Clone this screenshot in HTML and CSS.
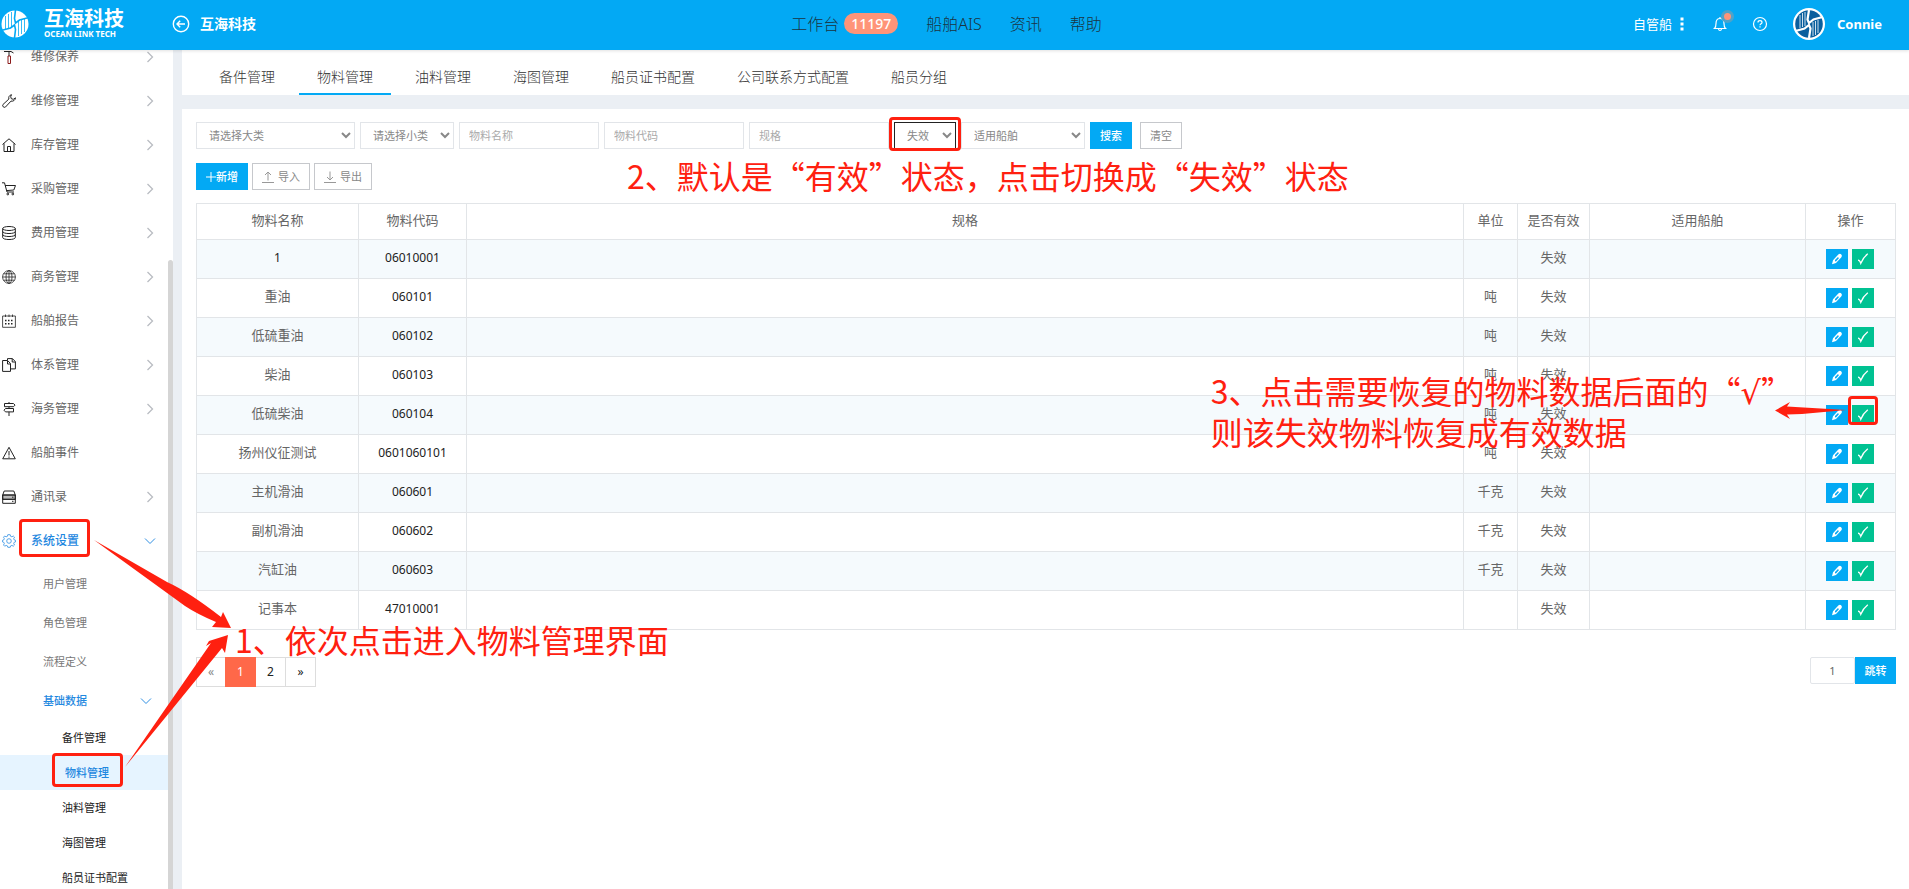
FILE: index.html
```html
<!DOCTYPE html>
<html lang="zh-CN">
<head>
<meta charset="utf-8">
<title>物料管理 - 互海科技</title>
<link rel="stylesheet" href="styles.css">
</head>
<body>
<svg class="sprite" aria-hidden="true">
  <symbol id="chev" viewBox="0 0 8 12"><path d="M1.5 1l5 5-5 5"/></symbol>
  <symbol id="chev-down" viewBox="0 0 12 8"><path d="M1 1.5l5 5 5-5"/></symbol>
  <symbol id="edit" viewBox="0 0 12 12"><path fill="#fff" fill-rule="evenodd" d="M1 11.2l1-4L7.3 1.6c1-1 2.200-.9 3-.2.8.9.8 2-.1 3L5 9.900zM4 8.300l1 .2 2.900-3.200-.9-1.200L4 7.100z"/></symbol>
  <symbol id="tick" viewBox="0 0 12 12"><path fill="none" stroke="#fff" stroke-width="1.300" d="M1 7.200c1.500 0 2.300 1.500 2.800 3.100C5.500 6 8 3 10.800.8"/></symbol>
</svg>

<header class="topbar">
  <div class="brand">
    <svg class="brand-mark" viewBox="0 0 28 28">
      <circle cx="14" cy="14" r="13.500" fill="#fff"/>
      <g fill="none" stroke="#03a9f4"><path stroke-width=".8" d="M10.500 2v15M7.500 4v15M4.500 6v14M17.500 26V11M20.500 24V9M23.500 22V8"/><path stroke-width="1.600" d="M14.500 0l-1 8.500 1 4.500 4-3 9.500-2.500M13.500 28l1-8.500-1-4.500-4 3L0 20.500"/></g>
    </svg>
    <div class="brand-text"><span class="brand-name">互海科技</span><span class="brand-en">OCEAN LINK TECH</span></div>
    <a class="back" href="#">
      <svg viewBox="0 0 18 18"><circle cx="9" cy="9" r="7.700"/><path d="M13 9H5M8.200 5.800L5 9l3.200 3.200"/></svg>
      互海科技</a>
  </div>
  <nav class="topnav">
    <a href="#">工作台<span class="badge">11197</span></a>
    <a href="#">船舶AIS</a>
    <a href="#">资讯</a>
    <a href="#">帮助</a>
  </nav>
  <div class="userbar">
    <button class="fleet" type="button">自管船
      <svg viewBox="0 0 4 14"><path d="M.5.500h3v3h-3zM.5 5.500h3v3h-3zM.5 10.500h3v3h-3z"/></svg></button>
    <button class="icon-btn bell" type="button" aria-label="消息">
      <svg viewBox="0 0 16 16"><path d="M2.500 12.500c1.200-1 1.500-2.500 1.500-5C4 4.500 5.500 2.500 8 2.500s4 2 4 5c0 2.500.3 4 1.500 5zM6.500 13c.2 1 .8 1.500 1.500 1.500s1.300-.5 1.500-1.500M8 1v1.500"/></svg>
      <span class="bell-dot"></span></button>
    <button class="icon-btn help" type="button" aria-label="帮助">
      <svg viewBox="0 0 16 16"><circle cx="8" cy="8" r="6.500"/><path d="M6 6.500C6 5.300 6.900 4.700 8 4.700s2 .7 2 1.700c0 1.300-2 1.400-2 2.900M8 10.300v1.300"/></svg></button>
    <a class="user" href="#">
      <svg viewBox="0 0 32 32"><circle cx="16" cy="16" r="16" fill="#fff"/><circle cx="16" cy="16" r="13.800" fill="#0a5f9e"/>
        <g fill="none" stroke="#fff"><path stroke-width=".8" d="M12 4v14M9.500 5v14M7 7v13M20 28V14M22.500 27V13M25 25V12"/><path stroke-width="2.200" d="M16 2l-1.500 9.500L16 15l4.500-3.500L29.500 9M16 30l1.500-9.500L16 17l-4.500 3.500L2.500 23"/></g></svg>
      Connie</a>
  </div>
</header>

<div class="shell">
  <aside class="sidebar">
    <ul class="menu">
      <li><a href="#"><svg class="mi" viewBox="0 0 14 14"><path d="M2 1.500h7l2.500 1.500M7 1.500V6"/><path d="M6 6h2.500v7.500H6z" stroke="#8b1a1a"/></svg>维修保养<svg class="arrow"><use href="#chev"/></svg></a></li>
      <li><a href="#"><svg class="mi" viewBox="0 0 14 14"><path d="M9.500.7c-2.200.5-3.200 2.300-2.600 4.300L.9 10.600c-1 1.500 1 3.500 2.500 2.500L9 7.100c2.200.5 4.200-.8 4.500-3.300l-2.200 1.500-2-.6-.6-2z"/></svg>维修管理<svg class="arrow"><use href="#chev"/></svg></a></li>
      <li><a href="#"><svg class="mi" viewBox="0 0 14 14"><path d="M.5 6.500L7 .8l6.500 5.700M2 5.500v8h10v-8M5.500 13.500v-5h3v5"/></svg>库存管理<svg class="arrow"><use href="#chev"/></svg></a></li>
      <li><a href="#"><svg class="mi" viewBox="0 0 14 14"><path d="M0 .8h2.500L5 10h7M3 3.500h10.500L11.800 8l-7.300.6"/><circle cx="5.800" cy="12" r=".9"/><circle cx="10.800" cy="12" r=".9"/></svg>采购管理<svg class="arrow"><use href="#chev"/></svg></a></li>
      <li><a href="#"><svg class="mi" viewBox="0 0 14 14"><ellipse cx="7" cy="2.500" rx="6.300" ry="2"/><path d="M.7 2.500v9c0 2.700 12.600 2.700 12.600 0v-9M.7 5.500c0 2.700 12.600 2.700 12.600 0M.7 8.500c0 2.700 12.600 2.700 12.600 0"/></svg>费用管理<svg class="arrow"><use href="#chev"/></svg></a></li>
      <li><a href="#"><svg class="mi thin" viewBox="0 0 14 14"><circle cx="7" cy="7" r="6.400"/><ellipse cx="7" cy="7" rx="3" ry="6.400"/><path d="M7 .6v12.800M.6 7h12.800M1.500 3.800h11M1.500 10.200h11"/></svg>商务管理<svg class="arrow"><use href="#chev"/></svg></a></li>
      <li><a href="#"><svg class="mi thin" viewBox="0 0 14 14"><path d="M.6 2h12.800v11.300H.6zM3.500.5V3M7 .5V3M10.500.5V3"/><path stroke-dasharray="1.500 1.500" stroke-width="1.500" d="M3 6.500h8.500M3 9.700h8.500"/></svg>船舶报告<svg class="arrow"><use href="#chev"/></svg></a></li>
      <li><a href="#"><svg class="mi" viewBox="0 0 14 14"><path d="M.6 2.500h5l2.900 3v7.900H.6zM5.500 2.500V6h3M5.500 2V.6h4.900l3 3v7.300h-4.700M10.200.6V4h3"/></svg>体系管理<svg class="arrow"><use href="#chev"/></svg></a></li>
      <li><a href="#"><svg class="mi" viewBox="0 0 14 14"><path d="M7 0v1.500M2.500 1.500h9l1.500 1.600-1.500 1.600h-9zM7 4.700v1.800M11.500 6.500h-8L2 8.200l1.500 1.700h8zM7 9.900V14"/></svg>海务管理<svg class="arrow"><use href="#chev"/></svg></a></li>
      <li><a href="#"><svg class="mi" viewBox="0 0 14 14"><path d="M7 1.300l6.300 11.500H.7zM7 5v4.500M7 10.500v1.300"/></svg>船舶事件</a></li>
      <li><a href="#"><svg class="mi" viewBox="0 0 14 14"><path fill="#bbb" d="M.7 5h12.600v4.300H.7z"/><path d="M.7 5l1.500-4h9.600l1.500 4v8.300H.7zM.7 5h12.600M.7 9.300h12.600M10 7.200h1.500M10 11.300h1.500"/></svg>通讯录<svg class="arrow"><use href="#chev"/></svg></a></li>
      <li class="open"><a href="#"><svg class="mi thin" viewBox="0 0 14 14"><circle cx="7" cy="7" r="2.300"/><path d="M5.800.7h2.400l.4 1.600 1.300.5 1.400-.8 1.200 1.200-.8 1.400.5 1.300 1.300.4v1.600l-1.300.4-.5 1.300.8 1.400-1.200 1.200-1.400-.8-1.300.5-.4 1.400H5.800l-.4-1.400-1.300-.5-1.400.8L1.500 11l.8-1.400-.5-1.300L.5 7.900V6.300l1.300-.4.5-1.300-.8-1.400L2.700 2l1.400.8 1.300-.5z"/></svg>系统设置<svg class="arrow down"><use href="#chev-down"/></svg></a><span class="ring ring-settings"></span>
        <ul class="submenu">
          <li><a href="#">用户管理</a></li>
          <li><a href="#">角色管理</a></li>
          <li><a href="#">流程定义</a></li>
          <li class="open"><a href="#">基础数据<svg class="arrow down"><use href="#chev-down"/></svg></a>
            <ul class="leafmenu">
              <li><a href="#">备件管理</a></li>
              <li class="current"><a href="#">物料管理</a><span class="ring ring-material"></span></li>
              <li><a href="#">油料管理</a></li>
              <li><a href="#">海图管理</a></li>
              <li><a href="#">船员证书配置</a></li>
            </ul>
          </li>
        </ul>
      </li>
    </ul>
    <span class="thumb"></span>
  </aside>

  <main class="main">
    <nav class="tabs">
      <a href="#">备件管理</a><a class="active" href="#">物料管理</a><a href="#">油料管理</a><a href="#">海图管理</a><a href="#">船员证书配置</a><a href="#">公司联系方式配置</a><a href="#">船员分组</a>
    </nav>
    <section class="panel">
      <form class="filters">
        <select class="f-major" aria-label="大类"><option>请选择大类</option></select>
        <select class="f-minor" aria-label="小类"><option>请选择小类</option></select>
        <input type="text" placeholder="物料名称" aria-label="物料名称">
        <input type="text" placeholder="物料代码" aria-label="物料代码">
        <input type="text" placeholder="规格" aria-label="规格">
        <span class="state"><select class="f-state" aria-label="状态"><option>失效</option><option>有效</option></select><span class="ring ring-state"></span></span>
        <select class="f-ship" aria-label="适用船舶"><option>适用船舶</option></select>
        <button class="btn primary" type="button">搜索</button>
        <button class="btn clear" type="button">清空</button>
      </form>
      <div class="actions">
        <button class="btn primary add" type="button"><svg viewBox="0 0 10 10"><path d="M5 0v10M0 5h10"/></svg>新增</button>
        <button class="btn" type="button"><svg viewBox="0 0 12 12"><path d="M6 9.500V1M3 4l3-3 3 3M0 11.500h12"/></svg>导入</button>
        <button class="btn" type="button"><svg viewBox="0 0 12 12"><path d="M6 .5V9M3 6l3 3 3-3M0 11.500h12"/></svg>导出</button>
        <p class="note note-two">2、默认是“有效”状态，点击切换成“失效”状态</p>
      </div>
      <div class="table-wrap">
        <table>
          <colgroup><col class="c-name"><col class="c-code"><col><col class="c-unit"><col class="c-valid"><col class="c-ship"><col class="c-ops"></colgroup>
          <thead><tr><th>物料名称</th><th>物料代码</th><th>规格</th><th>单位</th><th>是否有效</th><th>适用船舶</th><th>操作</th></tr></thead>
          <tbody>
            <tr><td class="num">1</td><td class="num">06010001</td><td></td><td></td><td>失效</td><td></td><td class="ops"><button type="button" class="op" aria-label="编辑"><svg><use href="#edit"/></svg></button><button type="button" class="op ok" aria-label="恢复"><svg><use href="#tick"/></svg></button></td></tr>
            <tr><td>重油</td><td class="num">060101</td><td></td><td>吨</td><td>失效</td><td></td><td class="ops"><button type="button" class="op" aria-label="编辑"><svg><use href="#edit"/></svg></button><button type="button" class="op ok" aria-label="恢复"><svg><use href="#tick"/></svg></button></td></tr>
            <tr><td>低硫重油</td><td class="num">060102</td><td></td><td>吨</td><td>失效</td><td></td><td class="ops"><button type="button" class="op" aria-label="编辑"><svg><use href="#edit"/></svg></button><button type="button" class="op ok" aria-label="恢复"><svg><use href="#tick"/></svg></button></td></tr>
            <tr><td>柴油</td><td class="num">060103</td><td></td><td>吨</td><td>失效</td><td></td><td class="ops"><button type="button" class="op" aria-label="编辑"><svg><use href="#edit"/></svg></button><button type="button" class="op ok" aria-label="恢复"><svg><use href="#tick"/></svg></button></td></tr>
            <tr><td>低硫柴油</td><td class="num">060104</td><td></td><td>吨</td><td>失效</td><td></td><td class="ops"><button type="button" class="op" aria-label="编辑"><svg><use href="#edit"/></svg></button><button type="button" class="op ok" aria-label="恢复"><svg><use href="#tick"/></svg><span class="ring ring-ok"></span></button></td></tr>
            <tr><td>扬州仪征测试</td><td class="num">0601060101</td><td></td><td>吨</td><td>失效</td><td></td><td class="ops"><button type="button" class="op" aria-label="编辑"><svg><use href="#edit"/></svg></button><button type="button" class="op ok" aria-label="恢复"><svg><use href="#tick"/></svg></button></td></tr>
            <tr><td>主机滑油</td><td class="num">060601</td><td></td><td>千克</td><td>失效</td><td></td><td class="ops"><button type="button" class="op" aria-label="编辑"><svg><use href="#edit"/></svg></button><button type="button" class="op ok" aria-label="恢复"><svg><use href="#tick"/></svg></button></td></tr>
            <tr><td>副机滑油</td><td class="num">060602</td><td></td><td>千克</td><td>失效</td><td></td><td class="ops"><button type="button" class="op" aria-label="编辑"><svg><use href="#edit"/></svg></button><button type="button" class="op ok" aria-label="恢复"><svg><use href="#tick"/></svg></button></td></tr>
            <tr><td>汽缸油</td><td class="num">060603</td><td></td><td>千克</td><td>失效</td><td></td><td class="ops"><button type="button" class="op" aria-label="编辑"><svg><use href="#edit"/></svg></button><button type="button" class="op ok" aria-label="恢复"><svg><use href="#tick"/></svg></button></td></tr>
            <tr><td>记事本</td><td class="num">47010001</td><td></td><td></td><td>失效</td><td></td><td class="ops"><button type="button" class="op" aria-label="编辑"><svg><use href="#edit"/></svg></button><button type="button" class="op ok" aria-label="恢复"><svg><use href="#tick"/></svg></button></td></tr>
          </tbody>
        </table>
        <p class="note note-three">3、点击需要恢复的物料数据后面的“<span class="root">√</span>”<br>则该失效物料恢复成有效数据</p>
        <svg class="pointer-three" viewBox="0 0 72 18"><path d="M71 8L12 4.500 15 0 0 8.500 15 17l-3-4.500L27 12z"/></svg>
      </div>
      <div class="footer">
        <nav class="pager"><a class="off" href="#">«</a><a class="on" href="#">1</a><a href="#">2</a><a href="#">»</a></nav>
        <form class="jump"><input type="text" value="1" aria-label="页码"><button class="btn primary" type="button">跳转</button></form>
        <p class="note note-one">1、依次点击进入物料管理界面</p>
      </div>
    </section>
  </main>
  <svg class="pointers" viewBox="0 0 140 232"><path d="M1 2L74 44Q96 54 128 79L130 74 138 90 119 89 123 84Q104 76 92 68zM32 229L118 105 113 108 116 103 135 97 132 115 129 110z"/></svg>
</div>
</body>
</html>
```
FILE: styles.css
```css
* { box-sizing: border-box; }
body {
  margin: 0;
  height: 100vh;
  display: flex;
  flex-direction: column;
  overflow: hidden;
  background: #ebeff4;
  color: #666;
  font: 13px/20px "Noto Sans", "Noto Sans CJK SC", sans-serif;
}
a { color: inherit; text-decoration: none; }
ul { list-style: none; margin: 0; padding: 0; }
button, input, select { font: inherit; color: inherit; }
button { cursor: pointer; }
.sprite { position: absolute; width: 0; height: 0; }

/* top bar */
.topbar {
  flex: none;
  display: grid;
  grid-template-columns: 1fr auto 1fr;
  align-items: center;
  height: 50px;
  padding: 0 16px 3px 0;
  background: #03a9f4;
  color: #fff;
  position: relative;
  z-index: 2;
  box-shadow: 0 1px 3px rgba(0, 0, 0, .12);
}
.brand { display: flex; align-items: center; }
.brand-mark { width: 28px; height: 28px; margin-left: 1px; }
.brand-text { display: flex; flex-direction: column; width: 128px; padding-left: 15px; }
.brand-name { font-size: 20px; font-weight: 700; line-height: 20px; }
.brand-en { font-size: 8px; font-weight: 700; line-height: 10px; white-space: nowrap; }
.back { display: flex; align-items: center; gap: 10px; margin-left: 15px; font-size: 14px; font-weight: 700; }
.back svg { width: 18px; height: 18px; fill: none; stroke: #fff; stroke-width: 1.4; }
.topnav { display: flex; align-items: center; gap: 28px; color: #1b3441; font-size: 16px; font-weight: 300; }
.topnav a { display: flex; align-items: center; }
.badge {
  margin-left: 5px;
  padding: 0 7px;
  border-radius: 11px;
  background: #ff9478;
  color: #fff;
  font-size: 14px;
  font-weight: 500;
  line-height: 21px;
}
.userbar { display: flex; align-items: center; justify-content: flex-end; padding-right: 11px; }
.userbar button { border: 0; padding: 0; background: none; color: #fff; }
.fleet { display: flex; align-items: center; gap: 8px; }
.fleet svg { width: 4px; height: 14px; fill: #fff; }
.icon-btn { display: flex; position: relative; }
.icon-btn svg { width: 16px; height: 16px; fill: none; stroke: #fff; stroke-width: 1.2; }
.bell { margin-left: 28px; }
.help { margin-left: 24px; }
.bell-dot {
  position: absolute;
  right: -6px;
  top: -6px;
  width: 13px;
  height: 13px;
  border: 3px solid #4ea3c9;
  border-radius: 50%;
  background: #ff9478;
}
.user { display: flex; align-items: center; gap: 12px; margin-left: 25px; font-weight: 700; font-size: 13px; }
.user svg { width: 32px; height: 32px; }

/* shell */
.shell { flex: 1; display: flex; min-height: 0; position: relative; }
.sidebar {
  flex: none;
  width: 173px;
  padding-right: 5px;
  background: #fff;
  overflow: hidden;
  position: relative;
}
.thumb { position: absolute; top: 210px; bottom: 0; right: 0; width: 5px; background: #d5d5d5; border-radius: 3px 3px 0 0; }
.menu { margin-top: -15px; font-size: 12px; }
.menu li { position: relative; }
.menu a { display: flex; align-items: center; height: 44px; padding: 0 14px 0 2px; }
.mi { width: 14px; height: 14px; margin-right: 15px; fill: none; stroke: #222; stroke-width: 1; }
.thin { stroke-width: .8; }
.arrow { width: 8px; height: 12px; margin-left: auto; fill: none; stroke: #b9bcc2; stroke-width: 1.3; }
.arrow.down { width: 12px; height: 8px; margin-right: -2px; stroke: #2f8fe3; stroke-width: 1; }
.open > a { color: #1f88e0; font-weight: 500; }
.open > a .mi { stroke: #2f8fe3; }
.submenu { padding-top: 1px; font-size: 11px; color: #777; }
.submenu a { height: 39px; padding: 0 18px 0 43px; }
.leafmenu { color: #222; }
.leafmenu a { height: 35px; padding: 0 0 0 62px; }
.current a { padding-left: 65px; background: #e6f4ff; color: #1f88e0; font-weight: 500; }

/* main column */
.main { flex: 1; min-width: 0; display: flex; flex-direction: column; gap: 14px; padding-left: 9px; background: #ebeff4; }
.tabs { display: flex; gap: 6px; height: 45px; padding-left: 19px; background: #fff; font-size: 14px; font-weight: 300; color: #333; }
.tabs a { padding: 17px 18px 0; }
.tabs .active { border-bottom: 2px solid #03a9f4; }
.panel { flex: 1; padding: 13px 13px 0 14px; background: #fff; }

.filters { display: flex; gap: 5px; font-size: 11px; color: #888; }
.filters select, .filters input {
  height: 27px;
  border: 1px solid #e2e5e9;
  border-radius: 0;
  background: #fff;
  outline: 0;
}
.filters select { padding: 0 2px 0 8px; }
.filters input { width: 140px; padding: 0 9px; }
::placeholder { color: #aaa; }
.f-major { width: 159px; }
.f-minor { width: 94px; }
.f-ship { width: 124px; }
.state { position: relative; display: flex; }
.filters .f-state { width: 62px; border-color: #222; }
.btn {
  display: flex;
  align-items: center;
  justify-content: center;
  gap: 4px;
  height: 27px;
  min-width: 41px;
  padding: 0 9px;
  border: 1px solid #c6c8cc;
  background: #fff;
  color: #888;
  font-size: 11px;
}
.btn svg { width: 12px; height: 12px; fill: none; stroke: #999; }
.primary { border: 0; background: #03a9f4; color: #fff; font-weight: 500; }
.filters .btn { width: 42px; }
.clear { margin-left: 3px; }
.actions { position: relative; display: flex; gap: 4px; margin: 14px 0 13px; }
.add { gap: 0; width: 52px; }
.add svg { width: 10px; height: 10px; stroke: #fff; }

/* table */
.table-wrap { position: relative; }
table { width: 100%; border-collapse: collapse; table-layout: fixed; text-align: center; }
.c-name { width: 162px; }
.c-code { width: 108px; }
.c-unit { width: 54px; }
.c-valid { width: 72px; }
.c-ship { width: 216px; }
.c-ops { width: 90px; }
th, td { border: 1px solid #e2e5e8; padding: 0 0 4px; font-weight: 400; }
th { height: 36px; padding-bottom: 3px; }
td { height: 39px; }
tbody tr:nth-child(odd) { background: #f5fafd; }
.num { padding-bottom: 2px; color: #222; font-size: 12px; }
td.ops { padding: 0 2px 0 0; font-size: 0; }
.op { position: relative; width: 22px; height: 20px; padding: 0; border: 0; background: #03a9f4; vertical-align: middle; }
.op.ok { margin-left: 4px; background: #00c292; }
.op svg { display: block; width: 12px; height: 12px; margin: auto; }

/* pagination */
.footer { position: relative; display: flex; justify-content: space-between; align-items: flex-start; margin-top: 27px; font-size: 12px; }
.pager { display: flex; color: #222; padding-right: 1px; }
.pager a { width: 30px; height: 30px; margin-right: -1px; border: 1px solid #ddd; text-align: center; line-height: 28px; }
.pager a + a { width: 31px; }
.pager .off { color: #888; }
.pager .on { position: relative; border-color: #ff6849; background: #ff6849; color: #fff; }
.jump { display: flex; }
.jump input { width: 45px; height: 27px; padding: 0; border: 1px solid #e2e5e9; border-radius: 2px; text-align: center; font-size: 11px; }

/* walkthrough marks laid over the page */
.ring { position: absolute; z-index: 1; border: 3px solid #ff2010; border-radius: 4px; pointer-events: none; }
.ring-settings { left: 19px; top: 0; width: 71px; height: 38px; }
.ring-material { left: 52px; top: -2px; width: 71px; height: 34px; }
.ring-state { left: -5px; top: -5px; width: 72px; height: 34px; }
.ring-ok { left: -4px; top: -9px; width: 30px; height: 29px; }
.note {
  position: absolute;
  margin: 0;
  color: #ff2010;
  font: 32px/41px "Noto Sans CJK SC", sans-serif;
  white-space: nowrap;
}
.root { font-family: "DejaVu Sans", sans-serif; line-height: 0; }
.note-two { left: 431px; top: -8px; }
.note-three { right: 103px; top: 167px; }
.note-one { left: 39px; top: -38px; }
.pointers { position: absolute; left: 93px; top: 488px; width: 140px; height: 232px; fill: #ff2010; pointer-events: none; }
.pointer-three { position: absolute; right: 49px; top: 199px; width: 72px; height: 18px; fill: #ff2010; pointer-events: none; }
```
